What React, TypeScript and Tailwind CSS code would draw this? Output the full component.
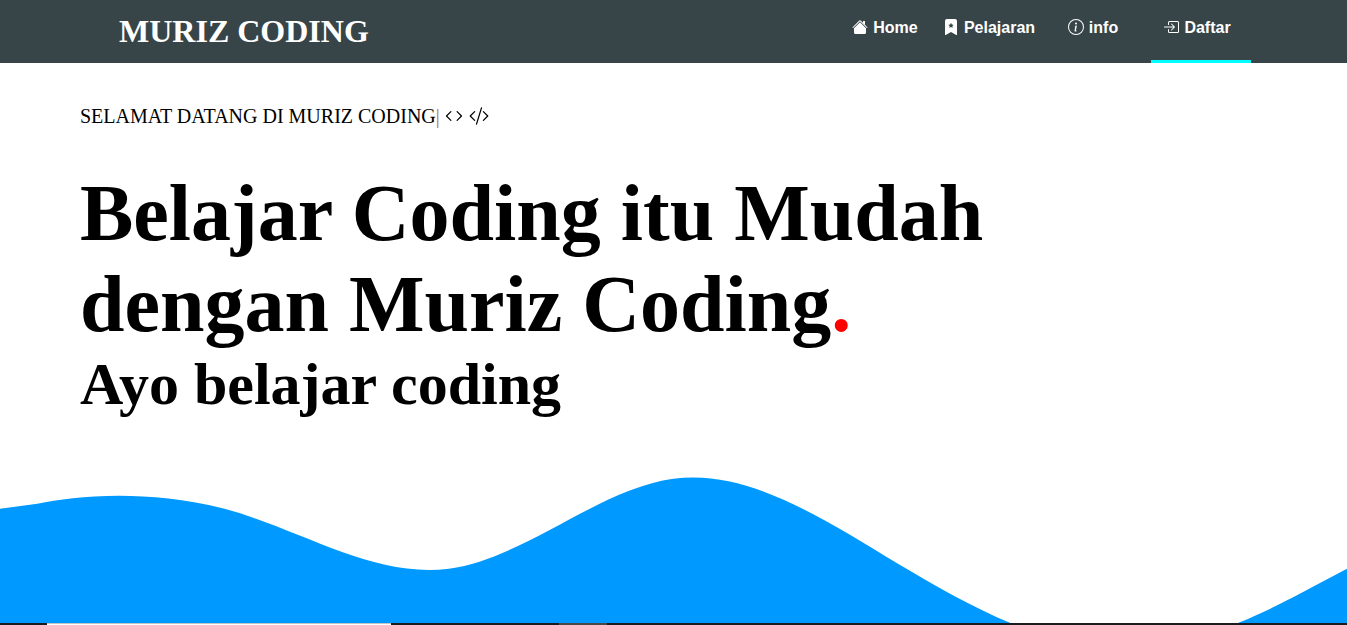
import type { ReactNode } from "react";
import {
  BsBookmarkStarFill,
  BsBoxArrowInRight,
  BsCode,
  BsCodeSlash,
  BsInfoCircle,
} from "react-icons/bs";

function HouseIcon() {
  return (
    <svg viewBox="0 0 16 16" className="size-4" fill="currentColor" aria-hidden="true">
      <path d="m8 3.293 6 6V13.5a1.5 1.5 0 0 1-1.5 1.5h-9A1.5 1.5 0 0 1 2 13.5V9.293l6-6zm5-.793V6l-2-2V2.5a.5.5 0 0 1 .5-.5h1a.5.5 0 0 1 .5.5z" />
      <path d="M7.293 1.5a1 1 0 0 1 1.414 0l6.647 6.646a.5.5 0 0 1-.708.708L8 2.207 1.354 8.854a.5.5 0 1 1-.708-.708L7.293 1.5z" />
    </svg>
  );
}

type NavItem = { label: string; icon: ReactNode; active?: boolean };

const navItems: NavItem[] = [
  { label: "Home", icon: <HouseIcon /> },
  { label: "Pelajaran", icon: <BsBookmarkStarFill className="size-4" /> },
  { label: "info", icon: <BsInfoCircle className="size-4" /> },
  { label: "Daftar", icon: <BsBoxArrowInRight className="size-4" />, active: true },
];

function Header() {
  return (
    <header className="flex h-[63px] shrink-0 justify-between bg-[#384548] pr-24 pl-[119px] text-white">
      <a
        href="#"
        className="flex items-center pb-0.5 font-['Liberation_Serif',serif] text-[32px] leading-9 font-bold"
      >
        MURIZ CODING
      </a>
      <nav className="flex gap-1 font-['Liberation_Sans',sans-serif] text-base leading-6 font-bold">
        {navItems.map((item) => (
          <a
            key={item.label}
            href="#"
            className={
              item.active
                ? "flex w-[100px] items-start justify-center gap-[5px] border-b-3 border-[#00ffff] pt-4 pr-2"
                : "flex w-[100px] items-start justify-center gap-[5px] border-b-3 border-transparent pt-4 pr-2"
            }
          >
            <span className="flex h-[22px] items-center">{item.icon}</span>
            {item.label}
          </a>
        ))}
      </nav>
    </header>
  );
}

function Hero() {
  return (
    <main className="shrink-0 px-20 pt-[41px] font-['Liberation_Serif',serif] text-black">
      <p className="flex items-center text-[20px] leading-6">
        SELAMAT DATANG DI MURIZ CODING
        <span className="text-[#b06838]">|</span>
        <BsCode className="ml-1 size-5" />
        <BsCodeSlash className="ml-[5px] size-5" />
      </p>
      <h1 className="mt-10 max-w-[960px] text-[80px] leading-[91px] font-bold">
        Belajar Coding itu Mudah dengan Muriz Coding<span className="text-[#ff0000]">.</span>
      </h1>
      <h2 className="text-[60px] leading-[69px] font-bold">Ayo belajar coding</h2>
    </main>
  );
}

function Wave() {
  return (
    <svg viewBox="0 0 1440 320" className="w-full shrink-0" aria-hidden="true">
      <path
        fill="#0099ff"
        d="M0,96L40,90.7C80,83,150,74,240,96C320,117.3,400,170.7,480,160C560,149.3,640,74.7,720,64C800,53.3,880,106.7,960,154.7C1040,202.7,1120,245.3,1200,245.3C1280,245.3,1360,202.7,1400,181.3L1440,160L1440,320L0,320Z"
      />
    </svg>
  );
}

export default function App() {
  return (
    <div className="flex h-screen flex-col bg-white">
      <div className="flex min-h-0 flex-1 flex-col overflow-hidden">
        <Header />
        <Hero />
        <Wave />
      </div>
      <footer className="flex h-[2px] shrink-0 bg-[#1c1c20] pl-[47px]">
        <div className="w-[344px] border-t border-[#c4c4c4] bg-white" />
        <div className="ml-[168px] w-12 bg-[#484848]" />
      </footer>
    </div>
  );
}
